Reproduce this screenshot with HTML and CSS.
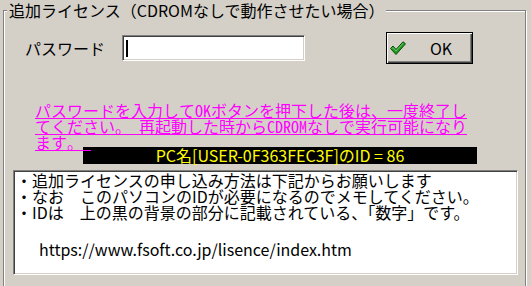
FILE: index.html
```html
<!DOCTYPE html>
<html lang="ja">
<head>
  <meta charset="UTF-8" />
  <title>追加ライセンス</title>
  <link rel="stylesheet" href="styles.css">
</head>
<body>
  <fieldset class="group">
    <legend>追加ライセンス（CDROMなしで動作させたい場合）</legend>

    <div class="pw-row">
      <span class="pw-label">パスワード</span>
      <div class="pw-box"><span class="caret"></span></div>
      <button class="ok-btn">
        <svg viewBox="0 0 16 14" width="16" height="14">
          <path d="M0.5 7.5 L3 5 L6 8.5 L13 0.8 L15.5 2.8 L6 13.5 Z" fill="#1f9a1f" stroke="#0b4a0b" stroke-width="1" stroke-linejoin="round"/>
          <path d="M2 7.6 L3 6.6 L6 10 L13.2 2.2" fill="none" stroke="#7fd87f" stroke-width="0.8"/>
        </svg>
        <span class="ok-text">OK</span>
      </button>
    </div>

    <p class="notice">パスワードを入力してOKボタンを押下した後は、一度終了し<br>てください。 再起動した時からCDROMなしで実行可能になり<br>ます。　</p>

    <div class="pc-id">PC名[USER-0F363FEC3F]のID = 86</div>

    <div class="memo">
      <div>・追加ライセンスの申し込み方法は下記からお願いします</div>
      <div>・なお　このパソコンのIDが必要になるのでメモしてください。</div>
      <div>・IDは　上の黒の背景の部分に記載されている、「数字」です。</div>
      <div class="url">https://www.fsoft.co.jp/lisence/index.htm</div>
    </div>
  </fieldset>
</body>
</html>
```

FILE: styles.css
```css
html, body {
  margin: 0;
  padding: 0;
  overflow: hidden;
  background: #d4d0c8;
}
body {
  height: 286px;
  font-family: "Noto Sans CJK JP", sans-serif;
  font-size: 16px;
  color: #000;
}
.group {
  box-sizing: border-box;
  width: 523px;
  height: 330px;
  margin: 1px 0 0 3px;
  padding: 0;
  border: 1px solid #808080;
  box-shadow: 1px 1px 0 #fff, inset 1px 1px 0 #fff;
}
.group legend {
  margin-left: 3px;
  padding: 0 2px;
  font-size: 16px;
  line-height: 18px;
  background: #d4d0c8;
}
.pw-row {
  display: flex;
  align-items: center;
  height: 32px;
  margin: 13px 0 0 21px;
}
.pw-label {
  width: 97px;
}
.pw-box {
  box-sizing: border-box;
  width: 183px;
  height: 26px;
  display: flex;
  align-items: center;
  padding-left: 3px;
  background: #fff;
  border: 1px solid;
  border-color: #808080 #fff #fff #808080;
  box-shadow: inset 1px 1px 0 #404040, inset -1px -1px 0 #d4d0c8;
}
.caret {
  width: 2px;
  height: 17px;
  background: #000;
}
.ok-btn {
  box-sizing: border-box;
  width: 87px;
  height: 32px;
  margin-left: 81px;
  padding: 0 0 0 3px;
  display: flex;
  align-items: center;
  border: 1px solid #000;
  background: #d4d0c8;
  box-shadow: inset 1px 1px 0 #fff, inset -1px -1px 0 #404040, inset -2px -2px 0 #808080;
  font-family: "Noto Sans CJK JP", sans-serif;
  font-size: 16px;
  color: #000;
}
.ok-text {
  margin-left: 24px;
}
.notice {
  margin: 38px 0 0 31px;
  color: #f0f;
  text-decoration: underline;
  white-space: nowrap;
  font-family: "Noto Sans Mono CJK JP", "Noto Sans CJK JP", monospace;
  font-size: 16px;
  line-height: 16px;
}
.pc-id {
  width: 394px;
  height: 17px;
  margin: -3px 0 0 79px;
  background: #000;
  color: #ff0;
  text-align: center;
  line-height: 17px;
}
.memo {
  box-sizing: border-box;
  width: 505px;
  height: 105px;
  margin: 6px 0 0 9px;
  padding: 1px 2px;
  background: #fff;
  border: 1px solid;
  border-color: #808080 #fff #fff #808080;
  box-shadow: inset 1px 1px 0 #404040, inset -1px -1px 0 #d4d0c8;
  line-height: 16px;
}
.memo .url {
  margin-top: 21px;
  padding-left: 23px;
}
```
